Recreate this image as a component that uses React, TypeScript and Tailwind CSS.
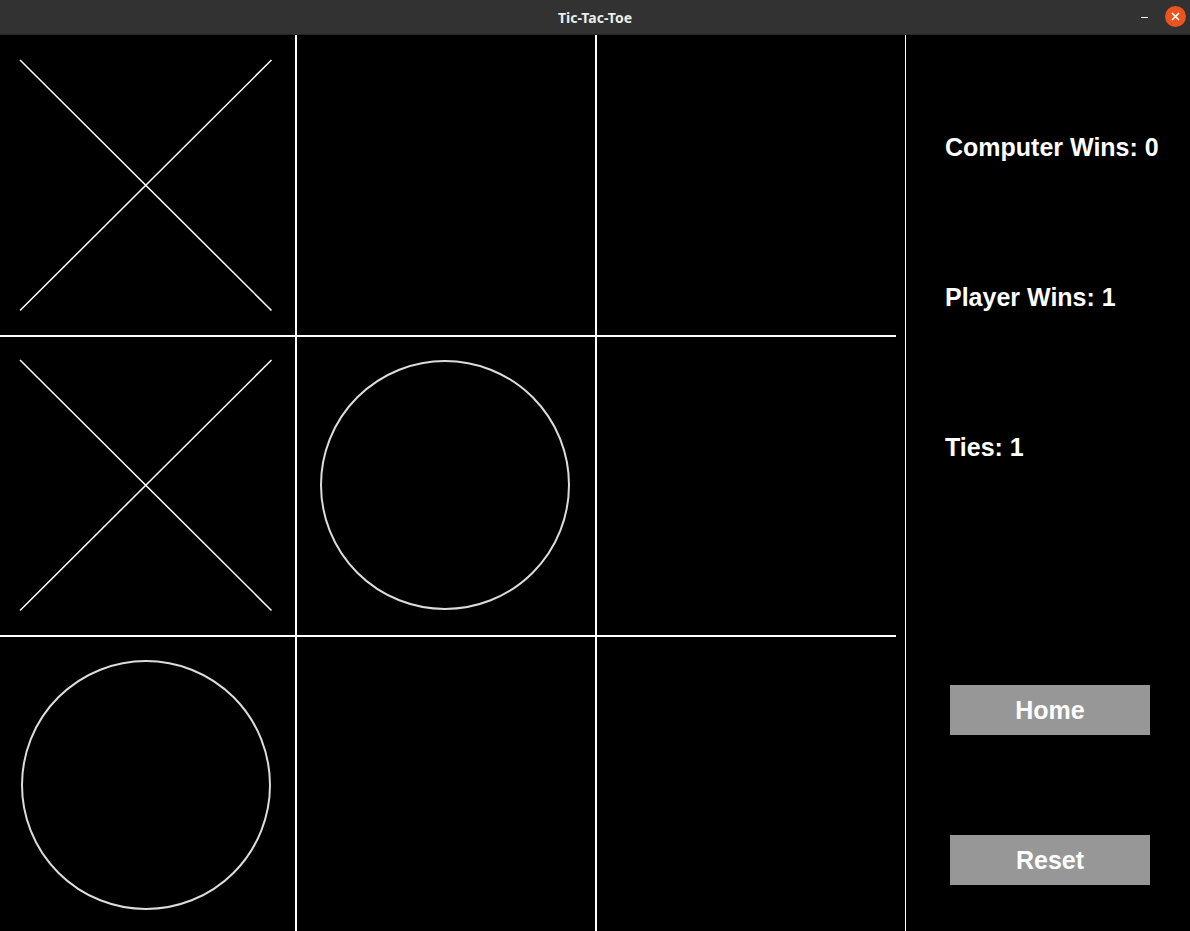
import React from "react";

type Mark = "X" | "O" | null;

const board: Mark[][] = [
  ["X", null, null],
  ["X", "O", null],
  ["O", null, null],
];

const font = { fontFamily: '"Liberation Sans", Arial, sans-serif' };

function XMark({ top }: { top: number }) {
  return (
    <svg className="block w-full h-full" overflow="visible">
      <line x1={20} y1={top} x2={271.5} y2={top + 250.5} stroke="#ffffff" strokeWidth={1.5} />
      <line x1={271.5} y1={top} x2={20} y2={top + 250.5} stroke="#ffffff" strokeWidth={1.5} />
    </svg>
  );
}

function OMark({ cx }: { cx: number }) {
  return (
    <svg className="block w-full h-full" overflow="visible">
      <circle cx={cx} cy={148} r={124} fill="none" stroke="#dcdcdc" strokeWidth={2} />
    </svg>
  );
}

const rowClass = [
  "h-[302px] border-b-2 border-white",
  "h-[300px] border-b-2 border-white",
  "flex-1",
];
const colClass = ["w-[297px] border-r-2 border-white", "w-[300px] border-r-2 border-white", "w-[299px]"];

export default function App() {
  return (
    <div className="w-[1190px] h-[931px] bg-black flex flex-col overflow-hidden" style={font}>
      {/* title bar */}
      <div className="h-[35px] shrink-0 bg-[#323232] border-b border-[#232323] flex items-center relative">
        <div
          className="flex-1 text-center text-[14px] font-bold text-[#ececec]"
          style={{ fontFamily: '"Noto Sans", "DejaVu Sans", sans-serif' }}
        >
          Tic-Tac-Toe
        </div>
        <div className="absolute right-[4px] top-[6px] flex items-center gap-[17px]">
          <div className="w-[7px] h-[1px] bg-white mt-[2px]" />
          <div className="w-[21px] h-[21px] rounded-full bg-[#e9541f] flex items-center justify-center">
            <svg width="9" height="9" viewBox="0 0 9 9">
              <path d="M1 1L8 8M8 1L1 8" stroke="#ffffff" strokeWidth="1.6" />
            </svg>
          </div>
        </div>
      </div>

      <div className="flex flex-1">
        {/* board */}
        <div className="w-[896px] flex flex-col">
          {board.map((row, r) => (
            <div key={r} className={`flex ${rowClass[r]}`}>
              {row.map((cell, c) => (
                <div key={c} className={`h-full ${colClass[c]}`}>
                  {cell === "X" && <XMark top={r === 0 ? 25 : 23} />}
                  {cell === "O" && <OMark cx={c === 0 ? 146 : 148} />}
                </div>
              ))}
            </div>
          ))}
        </div>

        <div className="w-[9px]" />

        {/* sidebar */}
        <div className="flex-1 border-l border-white flex flex-col pt-[98px] text-white font-bold">
          <div className="pl-[39px] flex flex-col gap-[122px] text-[25px] leading-[28px]">
            <div>Computer Wins: 0</div>
            <div>Player Wins: 1</div>
            <div>Ties: 1</div>
          </div>
          <div className="mt-[224px] ml-[44px] flex flex-col gap-[100px]">
            <button className="w-[200px] h-[50px] bg-[#979797] text-white text-[25px] font-bold flex items-center justify-center pt-[2px]">
              Home
            </button>
            <button className="w-[200px] h-[50px] bg-[#979797] text-white text-[25px] font-bold flex items-center justify-center pt-[2px]">
              Reset
            </button>
          </div>
        </div>
      </div>
    </div>
  );
}
